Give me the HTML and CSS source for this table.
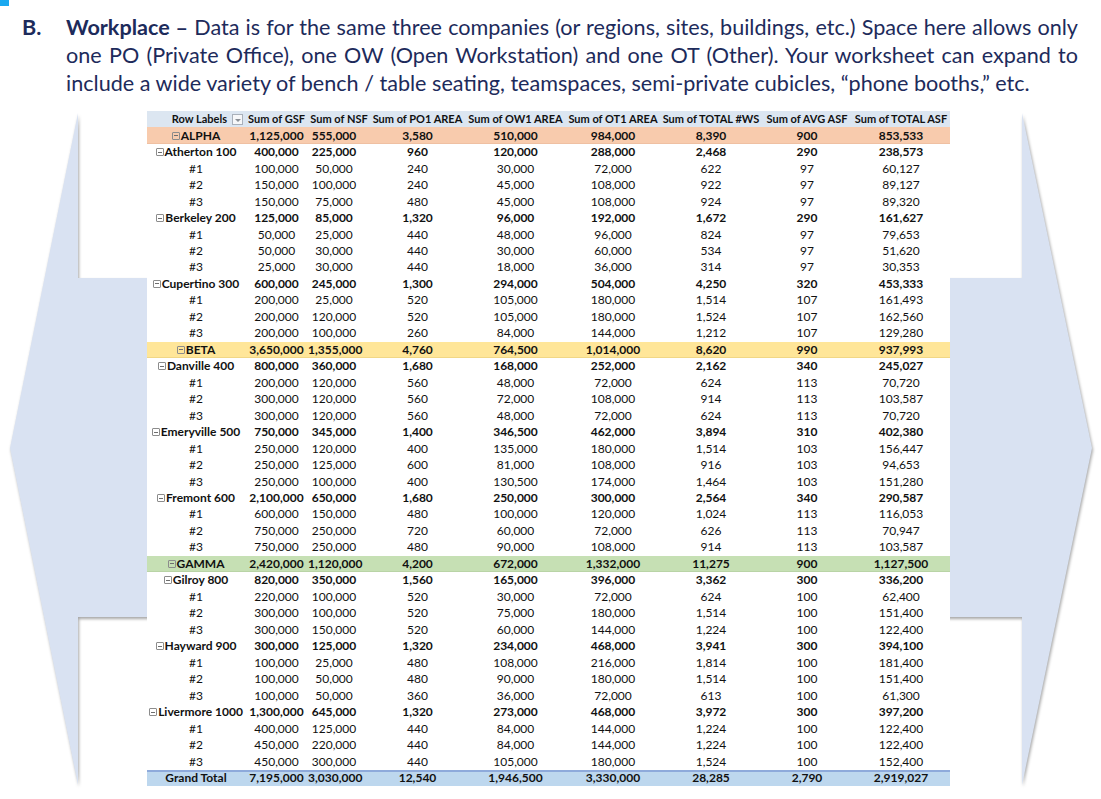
FILE: index.html
```html
<!DOCTYPE html>
<html lang="en">
<head>
<meta charset="utf-8">
<title>Workplace</title>
<link rel="stylesheet" href="styles.css">
</head>
<body>
<div class="corner-mark"></div>
<section class="intro">
  <div class="intro-label">B.</div>
  <div class="intro-text">
    <span class="line"><b>Workplace –</b> Data is for the same three companies (or regions, sites, buildings, etc.) Space here allows only</span>
    <span class="line">one PO (Private Office), one OW (Open Workstation) and one OT (Other). Your worksheet can expand to</span>
    <span class="line last">include a wide variety of bench / table seating, teamspaces, semi-private cubicles, “phone booths,” etc.</span>
  </div>
</section>

<section class="figure">
  <svg class="arrow-shape" width="1101" height="691" viewBox="0 0 1101 691" aria-hidden="true">
    <polygon points="78,5 78,170 1022,170 1022,5 1092,340 1022,677 1022,509 78,509 78,677 10,340" />
  </svg>

  <div class="pivot">
    <div class="row head">
      <div class="lbl"><span>Row Labels</span><span class="dd"></span></div>
      <div>Sum of GSF</div><div>Sum of NSF</div><div>Sum of PO1 AREA</div><div>Sum of OW1 AREA</div><div>Sum of OT1 AREA</div><div>Sum of TOTAL #WS</div><div>Sum of AVG ASF</div><div>Sum of TOTAL ASF</div>
    </div>

    <div class="row sec alpha"><div class="lbl"><i class="tg"></i>ALPHA</div><div>1,125,000</div><div class="nsf">555,000</div><div>3,580</div><div>510,000</div><div>984,000</div><div>8,390</div><div>900</div><div>853,533</div></div>
    <div class="row grp"><div class="lbl"><i class="tg"></i>Atherton 100</div><div>400,000</div><div class="nsf">225,000</div><div>960</div><div>120,000</div><div>288,000</div><div>2,468</div><div>290</div><div>238,573</div></div>
    <div class="row"><div class="lbl">#1</div><div>100,000</div><div class="nsf">50,000</div><div>240</div><div>30,000</div><div>72,000</div><div>622</div><div>97</div><div>60,127</div></div>
    <div class="row"><div class="lbl">#2</div><div>150,000</div><div class="nsf">100,000</div><div>240</div><div>45,000</div><div>108,000</div><div>922</div><div>97</div><div>89,127</div></div>
    <div class="row"><div class="lbl">#3</div><div>150,000</div><div class="nsf">75,000</div><div>480</div><div>45,000</div><div>108,000</div><div>924</div><div>97</div><div>89,320</div></div>
    <div class="row grp"><div class="lbl"><i class="tg"></i>Berkeley 200</div><div>125,000</div><div class="nsf">85,000</div><div>1,320</div><div>96,000</div><div>192,000</div><div>1,672</div><div>290</div><div>161,627</div></div>
    <div class="row"><div class="lbl">#1</div><div>50,000</div><div class="nsf">25,000</div><div>440</div><div>48,000</div><div>96,000</div><div>824</div><div>97</div><div>79,653</div></div>
    <div class="row"><div class="lbl">#2</div><div>50,000</div><div class="nsf">30,000</div><div>440</div><div>30,000</div><div>60,000</div><div>534</div><div>97</div><div>51,620</div></div>
    <div class="row"><div class="lbl">#3</div><div>25,000</div><div class="nsf">30,000</div><div>440</div><div>18,000</div><div>36,000</div><div>314</div><div>97</div><div>30,353</div></div>
    <div class="row grp"><div class="lbl"><i class="tg"></i>Cupertino 300</div><div>600,000</div><div class="nsf">245,000</div><div>1,300</div><div>294,000</div><div>504,000</div><div>4,250</div><div>320</div><div>453,333</div></div>
    <div class="row"><div class="lbl">#1</div><div>200,000</div><div class="nsf">25,000</div><div>520</div><div>105,000</div><div>180,000</div><div>1,514</div><div>107</div><div>161,493</div></div>
    <div class="row"><div class="lbl">#2</div><div>200,000</div><div class="nsf">120,000</div><div>520</div><div>105,000</div><div>180,000</div><div>1,524</div><div>107</div><div>162,560</div></div>
    <div class="row"><div class="lbl">#3</div><div>200,000</div><div class="nsf">100,000</div><div>260</div><div>84,000</div><div>144,000</div><div>1,212</div><div>107</div><div>129,280</div></div>

    <div class="row sec beta"><div class="lbl"><i class="tg"></i>BETA</div><div>3,650,000</div><div class="nsf">1,355,000</div><div>4,760</div><div>764,500</div><div>1,014,000</div><div>8,620</div><div>990</div><div>937,993</div></div>
    <div class="row grp"><div class="lbl"><i class="tg"></i>Danville 400</div><div>800,000</div><div class="nsf">360,000</div><div>1,680</div><div>168,000</div><div>252,000</div><div>2,162</div><div>340</div><div>245,027</div></div>
    <div class="row"><div class="lbl">#1</div><div>200,000</div><div class="nsf">120,000</div><div>560</div><div>48,000</div><div>72,000</div><div>624</div><div>113</div><div>70,720</div></div>
    <div class="row"><div class="lbl">#2</div><div>300,000</div><div class="nsf">120,000</div><div>560</div><div>72,000</div><div>108,000</div><div>914</div><div>113</div><div>103,587</div></div>
    <div class="row"><div class="lbl">#3</div><div>300,000</div><div class="nsf">120,000</div><div>560</div><div>48,000</div><div>72,000</div><div>624</div><div>113</div><div>70,720</div></div>
    <div class="row grp"><div class="lbl"><i class="tg"></i>Emeryville 500</div><div>750,000</div><div class="nsf">345,000</div><div>1,400</div><div>346,500</div><div>462,000</div><div>3,894</div><div>310</div><div>402,380</div></div>
    <div class="row"><div class="lbl">#1</div><div>250,000</div><div class="nsf">120,000</div><div>400</div><div>135,000</div><div>180,000</div><div>1,514</div><div>103</div><div>156,447</div></div>
    <div class="row"><div class="lbl">#2</div><div>250,000</div><div class="nsf">125,000</div><div>600</div><div>81,000</div><div>108,000</div><div>916</div><div>103</div><div>94,653</div></div>
    <div class="row"><div class="lbl">#3</div><div>250,000</div><div class="nsf">100,000</div><div>400</div><div>130,500</div><div>174,000</div><div>1,464</div><div>103</div><div>151,280</div></div>
    <div class="row grp"><div class="lbl"><i class="tg"></i>Fremont 600</div><div>2,100,000</div><div class="nsf">650,000</div><div>1,680</div><div>250,000</div><div>300,000</div><div>2,564</div><div>340</div><div>290,587</div></div>
    <div class="row"><div class="lbl">#1</div><div>600,000</div><div class="nsf">150,000</div><div>480</div><div>100,000</div><div>120,000</div><div>1,024</div><div>113</div><div>116,053</div></div>
    <div class="row"><div class="lbl">#2</div><div>750,000</div><div class="nsf">250,000</div><div>720</div><div>60,000</div><div>72,000</div><div>626</div><div>113</div><div>70,947</div></div>
    <div class="row"><div class="lbl">#3</div><div>750,000</div><div class="nsf">250,000</div><div>480</div><div>90,000</div><div>108,000</div><div>914</div><div>113</div><div>103,587</div></div>

    <div class="row sec gamma"><div class="lbl"><i class="tg"></i>GAMMA</div><div>2,420,000</div><div class="nsf">1,120,000</div><div>4,200</div><div>672,000</div><div>1,332,000</div><div>11,275</div><div>900</div><div>1,127,500</div></div>
    <div class="row grp"><div class="lbl"><i class="tg"></i>Gilroy 800</div><div>820,000</div><div class="nsf">350,000</div><div>1,560</div><div>165,000</div><div>396,000</div><div>3,362</div><div>300</div><div>336,200</div></div>
    <div class="row"><div class="lbl">#1</div><div>220,000</div><div class="nsf">100,000</div><div>520</div><div>30,000</div><div>72,000</div><div>624</div><div>100</div><div>62,400</div></div>
    <div class="row"><div class="lbl">#2</div><div>300,000</div><div class="nsf">100,000</div><div>520</div><div>75,000</div><div>180,000</div><div>1,514</div><div>100</div><div>151,400</div></div>
    <div class="row"><div class="lbl">#3</div><div>300,000</div><div class="nsf">150,000</div><div>520</div><div>60,000</div><div>144,000</div><div>1,224</div><div>100</div><div>122,400</div></div>
    <div class="row grp"><div class="lbl"><i class="tg"></i>Hayward 900</div><div>300,000</div><div class="nsf">125,000</div><div>1,320</div><div>234,000</div><div>468,000</div><div>3,941</div><div>300</div><div>394,100</div></div>
    <div class="row"><div class="lbl">#1</div><div>100,000</div><div class="nsf">25,000</div><div>480</div><div>108,000</div><div>216,000</div><div>1,814</div><div>100</div><div>181,400</div></div>
    <div class="row"><div class="lbl">#2</div><div>100,000</div><div class="nsf">50,000</div><div>480</div><div>90,000</div><div>180,000</div><div>1,514</div><div>100</div><div>151,400</div></div>
    <div class="row"><div class="lbl">#3</div><div>100,000</div><div class="nsf">50,000</div><div>360</div><div>36,000</div><div>72,000</div><div>613</div><div>100</div><div>61,300</div></div>
    <div class="row grp"><div class="lbl"><i class="tg"></i>Livermore 1000</div><div>1,300,000</div><div class="nsf">645,000</div><div>1,320</div><div>273,000</div><div>468,000</div><div>3,972</div><div>300</div><div>397,200</div></div>
    <div class="row"><div class="lbl">#1</div><div>400,000</div><div class="nsf">125,000</div><div>440</div><div>84,000</div><div>144,000</div><div>1,224</div><div>100</div><div>122,400</div></div>
    <div class="row"><div class="lbl">#2</div><div>450,000</div><div class="nsf">220,000</div><div>440</div><div>84,000</div><div>144,000</div><div>1,224</div><div>100</div><div>122,400</div></div>
    <div class="row"><div class="lbl">#3</div><div>450,000</div><div class="nsf">300,000</div><div>440</div><div>105,000</div><div>180,000</div><div>1,524</div><div>100</div><div>152,400</div></div>

    <div class="row total"><div class="lbl">Grand Total</div><div>7,195,000</div><div class="nsf">3,030,000</div><div>12,540</div><div>1,946,500</div><div>3,330,000</div><div>28,285</div><div>2,790</div><div>2,919,027</div></div>
  </div>
</section>
</body>
</html>
```

FILE: styles.css
```css
html, body {
  margin: 0;
  padding: 0;
  background: #ffffff;
}

body {
  width: 1101px;
  height: 799px;
  overflow: hidden;
  font-family: "Lato", "Open Sans", sans-serif;
}

.corner-mark {
  width: 9px;
  height: 6px;
  background: #1aa9f0;
}

.intro {
  display: flex;
  margin-top: 7px;
  padding-left: 22px;
  color: #1d2b5b;
  font-size: 21.6px;
  line-height: 28px;
}

.intro-label {
  width: 44px;
  font-weight: 700;
}

.intro-text {
  width: 1012px;
}

.intro-text .line {
  display: block;
  text-align: justify;
  text-align-last: justify;
}

.intro-text .line.last {
  text-align-last: left;
}

.intro-text b {
  font-weight: 700;
}

.figure {
  position: relative;
  margin-top: 11px;
  padding-top: 3px;
  height: 688px;
}

.arrow-shape {
  position: absolute;
  left: 0;
  top: 0;
}

.arrow-shape polygon {
  fill: #d9e2f2;
  filter: drop-shadow(1px 2px 1.5px rgba(0, 0, 0, 0.35));
}

.pivot {
  position: relative;
  width: 803px;
  margin: 0 0 0 147px;
  background: #ffffff;
  font-size: 12px;
  color: #111111;
}

.row {
  display: grid;
  grid-template-columns: 98px 63px 62px 95px 101px 94px 102px 90px 98px;
  height: 16.475px;
  align-items: center;
  text-align: center;
  line-height: 16px;
  white-space: nowrap;
}

.row .nsf {
  padding-right: 10px;
}

.row.head {
  background: #dce6f1;
  font-weight: 700;
  font-size: 11px;
}

.row.head .lbl {
  display: flex;
  justify-content: flex-end;
  align-items: center;
  gap: 5px;
  padding-right: 2px;
}

.dd {
  position: relative;
  width: 11px;
  height: 11px;
  border: 1px solid #a9b0ba;
  background: #f6f7f9;
  box-sizing: border-box;
}

.dd::after {
  content: "";
  position: absolute;
  left: 2px;
  top: 4px;
  border-left: 3px solid transparent;
  border-right: 3px solid transparent;
  border-top: 3px solid #8a8f96;
}

.row.sec,
.row.grp,
.row.total {
  font-weight: 700;
}

.row.alpha {
  background: #f8cbad;
  box-shadow: inset 0 -1px 0 #efc0a2;
}

.row.beta {
  background: #ffe699;
  box-shadow: inset 0 -1px 0 #f1d786;
}

.row.gamma {
  background: #c6e0b4;
  box-shadow: inset 0 -1px 0 #b9d4a6;
}

.row.total {
  background: #bdd7ee;
  box-shadow: inset 0 2px 0 #8eaadb;
}

.tg {
  display: inline-block;
  position: relative;
  width: 8px;
  height: 8px;
  margin-right: 1px;
  border: 1px solid #8c8c8c;
  border-radius: 1px;
  box-sizing: border-box;
}

.tg::after {
  content: "";
  position: absolute;
  left: 1px;
  right: 1px;
  top: 2.5px;
  height: 1px;
  background: #6e6e6e;
}
```
